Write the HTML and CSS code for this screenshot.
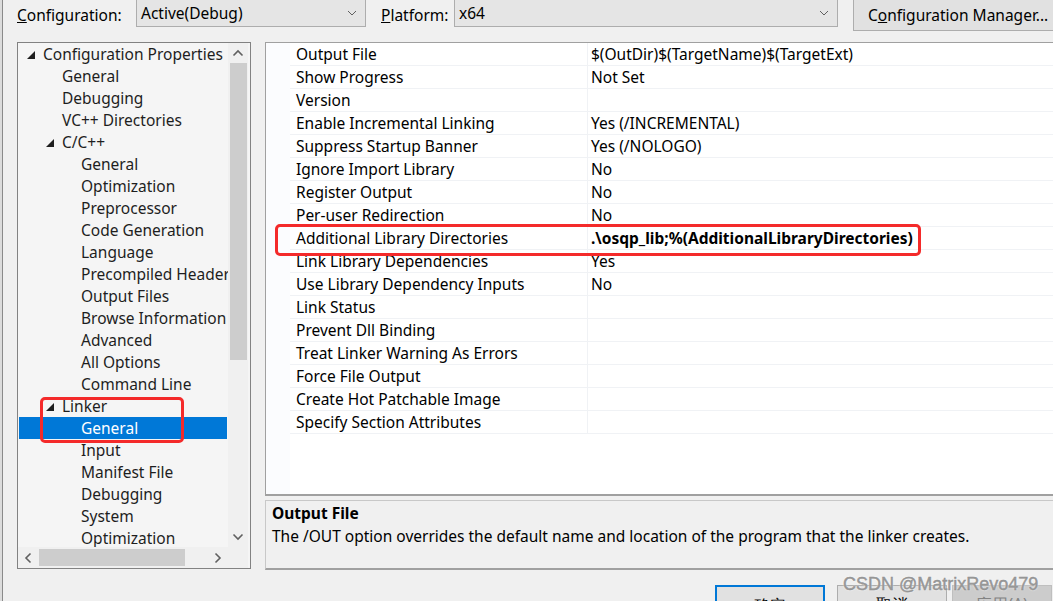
FILE: index.html
```html
<!DOCTYPE html>
<html lang="en">
<head>
    <meta charset="UTF-8">
    <title>Linker General Property Pages</title>
    <link rel="stylesheet" href="styles.css">
</head>
<body>
    <div class="edge"></div>
    <div class="page">
        <!-- Top toolbar -->
        <div class="toolbar">
            <span class="label label-config"><u>C</u>onfiguration:</span>
            <div class="combo combo-config">
                <span>Active(Debug)</span>
                <svg class="chev" width="10" height="6" viewBox="0 0 10 6"><path d="M1 1 L5 5 L9 1" fill="none" stroke="#606060" stroke-width="1"/></svg>
            </div>
            <span class="label label-platform"><u>P</u>latform:</span>
            <div class="combo combo-platform">
                <span>x64</span>
                <svg class="chev" width="10" height="6" viewBox="0 0 10 6"><path d="M1 1 L5 5 L9 1" fill="none" stroke="#606060" stroke-width="1"/></svg>
            </div>
            <div class="btn-manager">C<u>o</u>nfiguration Manager...</div>
        </div>

        <div class="main">
            <!-- Left tree -->
            <div class="tree">
                <div class="tree-body">
                    <div class="node lvl0"><svg class="tri" width="8" height="8" viewBox="0 0 8 8"><polygon points="8,0 8,8 0,8" fill="#1e1e1e"/></svg>Configuration Properties</div>
                    <div class="node lvl1">General</div>
                    <div class="node lvl1">Debugging</div>
                    <div class="node lvl1">VC++ Directories</div>
                    <div class="node lvl1 open"><svg class="tri" width="8" height="8" viewBox="0 0 8 8"><polygon points="8,0 8,8 0,8" fill="#1e1e1e"/></svg>C/C++</div>
                    <div class="node lvl2">General</div>
                    <div class="node lvl2">Optimization</div>
                    <div class="node lvl2">Preprocessor</div>
                    <div class="node lvl2">Code Generation</div>
                    <div class="node lvl2">Language</div>
                    <div class="node lvl2">Precompiled Headers</div>
                    <div class="node lvl2">Output Files</div>
                    <div class="node lvl2">Browse Information</div>
                    <div class="node lvl2">Advanced</div>
                    <div class="node lvl2">All Options</div>
                    <div class="node lvl2">Command Line</div>
                    <div class="node lvl1 open"><svg class="tri" width="8" height="8" viewBox="0 0 8 8"><polygon points="8,0 8,8 0,8" fill="#1e1e1e"/></svg>Linker</div>
                    <div class="node lvl2 selected">General</div>
                    <div class="node lvl2">Input</div>
                    <div class="node lvl2">Manifest File</div>
                    <div class="node lvl2">Debugging</div>
                    <div class="node lvl2">System</div>
                    <div class="node lvl2">Optimization</div>
                </div>
                <div class="vscroll">
                    <svg class="arrow" width="12" height="8" viewBox="0 0 12 8"><path d="M1.5 6.5 L6 2 L10.5 6.5" fill="none" stroke="#606060" stroke-width="1.6"/></svg>
                    <div class="vthumb"></div>
                    <div class="vfill"></div>
                    <svg class="arrow" width="12" height="8" viewBox="0 0 12 8"><path d="M1.5 1.5 L6 6 L10.5 1.5" fill="none" stroke="#606060" stroke-width="1.6"/></svg>
                </div>
                <div class="hscroll">
                    <svg class="arrow" width="8" height="12" viewBox="0 0 8 12"><path d="M6.5 1.5 L2 6 L6.5 10.5" fill="none" stroke="#606060" stroke-width="1.6"/></svg>
                    <div class="hthumb"></div>
                    <div class="hfill"></div>
                    <svg class="arrow" width="8" height="12" viewBox="0 0 8 12"><path d="M1.5 1.5 L6 6 L1.5 10.5" fill="none" stroke="#606060" stroke-width="1.6"/></svg>
                </div>
                <div class="corner"></div>
                <!-- highlight mark -->
                <div class="mark mark-tree"></div>
            </div>

            <!-- Right side -->
            <div class="right">
                <div class="grid" id="grid">
                    <div class="mark mark-grid"></div>
                </div>
                <div class="desc">
                    <div class="desc-title">Output File</div>
                    <div class="desc-text">The /OUT option overrides the default name and location of the program that the linker creates.</div>
                </div>
            </div>
        </div>

        <div class="footer">
            <div class="btn btn-ok">确定</div>
            <div class="btn">取消</div>
            <div class="btn btn-disabled">应用(A)</div>
            <div class="watermark">CSDN @MatrixRevo479</div>
        </div>
    </div>

    <script>
        // Property rows
        const props = [
            ['Output File', '$(OutDir)$(TargetName)$(TargetExt)'],
            ['Show Progress', 'Not Set'],
            ['Version', ''],
            ['Enable Incremental Linking', 'Yes (/INCREMENTAL)'],
            ['Suppress Startup Banner', 'Yes (/NOLOGO)'],
            ['Ignore Import Library', 'No'],
            ['Register Output', 'No'],
            ['Per-user Redirection', 'No'],
            ['Additional Library Directories', '.\\osqp_lib;%(AdditionalLibraryDirectories)', true],
            ['Link Library Dependencies', 'Yes'],
            ['Use Library Dependency Inputs', 'No'],
            ['Link Status', ''],
            ['Prevent Dll Binding', ''],
            ['Treat Linker Warning As Errors', ''],
            ['Force File Output', ''],
            ['Create Hot Patchable Image', ''],
            ['Specify Section Attributes', '']
        ];

        const grid = document.getElementById('grid');
        props.forEach(p => {
            const row = document.createElement('div');
            row.className = 'row';
            const name = document.createElement('div');
            name.className = 'cell-name';
            name.textContent = p[0];
            const value = document.createElement('div');
            value.className = 'cell-value' + (p[2] ? ' bold' : '');
            value.textContent = p[1];
            row.appendChild(name);
            row.appendChild(value);
            grid.appendChild(row);
        });
    </script>
</body>
</html>
```

FILE: styles.css
```css
/* Property pages dialog */
body {
    margin: 0;
    background: #f0f0f0;
    font-family: "Noto Sans", sans-serif;
    font-size: 15.5px;
    color: #000;
    display: flex;
    width: 1053px;
    height: 601px;
    overflow: hidden;
}
.edge {
    width: 2px;
    flex-shrink: 0;
    background: #dcdcdc;
    border-right: 1px solid #8a8a8a;
}
.page {
    flex: 1;
    display: flex;
    flex-direction: column;
    min-width: 0;
}

/* Toolbar */
.toolbar {
    display: flex;
    align-items: flex-start;
    height: 42px;
    flex-shrink: 0;
    padding-left: 14px;
}
.toolbar > * {
    flex-shrink: 0;
}
.label {
    line-height: 28px;
    margin-top: 1px;
}
.label-config {
    width: 119px;
}
.label-platform {
    margin-left: 15px;
    width: 73px;
}
.combo {
    margin-top: -1px;
    height: 28px;
    box-sizing: border-box;
    border: 1px solid #adadad;
    background: #e5e5e5;
    display: flex;
    align-items: center;
    justify-content: space-between;
    padding: 0 8px 0 4px;
    line-height: 26px;
}
.combo-config {
    width: 230px;
}
.combo-platform {
    width: 384px;
}
.btn-manager {
    margin-left: 15px;
    margin-top: -1px;
    height: 32px;
    box-sizing: border-box;
    border: 1px solid #adadad;
    background: #e1e1e1;
    padding: 0 14px;
    line-height: 30px;
    white-space: nowrap;
}

/* Main area */
.main {
    display: flex;
    height: 528px;
    flex-shrink: 0;
    padding-left: 14px;
}

/* Tree */
.tree {
    position: relative;
    width: 234px;
    height: 527px;
    box-sizing: border-box;
    border: 1px solid #828282;
    background: #f5f5f5;
    display: grid;
    grid-template-columns: 210px 20px;
    grid-template-rows: 504px 21px;
    flex-shrink: 0;
}
.tree-body {
    overflow: hidden;
    padding: 0 0 0 1px;
    color: #1e1e1e;
}
.node {
    height: 22px;
    line-height: 22px;
    white-space: nowrap;
    position: relative;
}
.lvl0 { padding-left: 24px; }
.lvl1 { padding-left: 43px; }
.lvl2 { padding-left: 62px; }
.tri {
    position: absolute;
    top: 8px;
}
.lvl0 .tri { left: 8px; }
.lvl1 .tri { left: 27px; }
.node.selected {
    background: #0078d7;
    color: #fff;
    margin-right: 1px;
}
.vscroll {
    background: #f0f0f0;
    display: flex;
    flex-direction: column;
    align-items: center;
}
.vscroll .arrow {
    margin: 6px 0;
    flex-shrink: 0;
}
.vthumb {
    width: 17px;
    height: 297px;
    background: #cdcdcd;
    flex-shrink: 0;
}
.vfill {
    flex: 1;
}
.hscroll {
    background: #f0f0f0;
    display: flex;
    align-items: center;
    padding: 0 6px;
}
.hthumb {
    width: 146px;
    height: 17px;
    background: #cdcdcd;
    margin-left: 7px;
}
.hfill {
    flex: 1;
}
.corner {
    background: #f0f0f0;
}

/* Red markers drawn over the screenshot */
.mark {
    position: absolute;
    border: 3px solid #f42a2a;
    border-radius: 5px;
    box-sizing: border-box;
    pointer-events: none;
}
.mark-tree {
    left: 22px;
    top: 354px;
    width: 144px;
    height: 46px;
}
.mark-grid {
    left: 9px;
    top: 181px;
    width: 646px;
    height: 32px;
}

/* Right column */
.right {
    margin-left: 14px;
    flex: 1;
    display: flex;
    flex-direction: column;
}
.grid {
    position: relative;
    height: 454px;
    box-sizing: border-box;
    border: 1px solid #a0a0a0;
    border-right: none;
    border-bottom: 2px solid #a0a0a0;
    background: #fff;
    padding-left: 24px;
    background-image: linear-gradient(#fbfcfe, #fbfcfe);
    background-size: 24px 100%;
    background-repeat: no-repeat;
}
.row {
    display: flex;
    height: 23px;
    box-sizing: border-box;
    border-bottom: 1px solid #f0f2f5;
    line-height: 22px;
}
.cell-name {
    width: 298px;
    box-sizing: border-box;
    padding-left: 6px;
    border-right: 1px solid #f0f2f5;
    white-space: nowrap;
}
.cell-value {
    padding-left: 3px;
    white-space: nowrap;
}
.bold {
    font-weight: bold;
}
.desc {
    margin-top: 4px;
    height: 70px;
    box-sizing: border-box;
    border-top: 1px solid #c8c8c8;
    border-left: 1px solid #c8c8c8;
    border-bottom: 2px solid #a0a0a0;
    padding: 1px 6px;
    line-height: 23px;
}
.desc-title {
    font-weight: bold;
}

/* Footer buttons */
.footer {
    position: relative;
    display: flex;
    padding: 15px 0 0 712px;
    gap: 12px;
}
.btn {
    width: 110px;
    height: 32px;
    box-sizing: border-box;
    border: 1px solid #adadad;
    background: #e1e1e1;
    text-align: center;
    line-height: 36px;
    flex-shrink: 0;
}
.btn-ok {
    border: 2px solid #0078d7;
}
.btn-disabled {
    width: 100px;
    margin-left: -7px;
    background: #cccccc;
    border-color: #bfbfbf;
    color: #838383;
}
.watermark {
    position: absolute;
    left: 840px;
    top: 4px;
    font-family: "Liberation Sans", sans-serif;
    font-size: 18px;
    color: #9a9a9a;
    -webkit-text-stroke: 0.4px #8c8c8c;
    text-shadow: 0 0 2px #fff;
    white-space: nowrap;
}
```
